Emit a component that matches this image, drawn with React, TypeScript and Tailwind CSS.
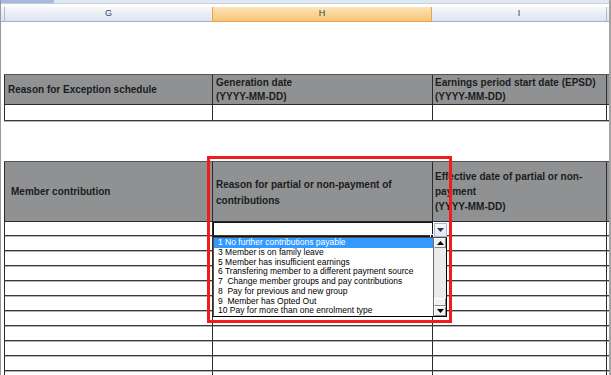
import React from "react";

const items = [
  "1 No further contributions payable",
  "3 Member is on family leave",
  "5 Member has insufficient earnings",
  "6 Transfering member to a different payment source",
  "7  Change member groups and pay contributions",
  "8  Pay for previous and new group",
  "9  Member has Opted Out",
  "10 Pay for more than one enrolment type",
];

function WhiteRow({ h }: { h: string }) {
  return (
    <div className={`flex ${h} border-b border-[#3a3a3a] shadow-[0_1px_0_#b4b4b4]`}>
      <div className="w-[208px] border-l border-[#2b2b2b]" />
      <div className="w-[220px] border-l border-[#2b2b2b]" />
      <div className="w-[174px] border-l border-[#2b2b2b]" />
      <div className="w-[3px] border-l border-[#2b2b2b]" />
    </div>
  );
}

function UpTri() {
  return (
    <svg width="7" height="4" viewBox="0 0 7 4">
      <polygon points="3.5,0 7,4 0,4" fill="#000" />
    </svg>
  );
}

function DownTri({ color = "#000" }: { color?: string }) {
  return (
    <svg width="7" height="4" viewBox="0 0 7 4">
      <polygon points="0,0 7,0 3.5,4" fill={color} />
    </svg>
  );
}

export default function App() {
  const rows = Array.from({ length: 10 });
  return (
    <div className="relative w-[611px] h-[375px] overflow-hidden bg-white border-l border-l-[#9a9a9a] border-r-2 border-r-[#a3a3a3] [font-family:'Liberation_Sans',Arial,sans-serif]">
      {/* top strip */}
      <div className="flex h-[3px]">
        <div className="w-[53px] bg-[#a4bbdb]" />
        <div className="flex-1 bg-[#e1e8f1]" />
      </div>
      <div className="h-px bg-[#c2cedc]" />
      <div className="h-[3px]" />

      {/* column headers */}
      <div className="flex h-[15px] text-[9px] text-[#2f405a]">
        <div className="w-[3px] border-b border-[#9db3cb] bg-gradient-to-b from-[#f5f8fb] to-[#dbe3ed]" />
        <div className="w-[208px] flex items-center justify-center border-l border-b border-[#a9bcd2] border-b-[#9db3cb] bg-gradient-to-b from-[#f7f9fc] to-[#dce4ee]">
          G
        </div>
        <div className="w-[220px] flex items-center justify-center border-x border-b border-[#eea14d] bg-gradient-to-b from-[#fce4b4] to-[#f6c47a]">
          H
        </div>
        <div className="w-[174px] flex items-center justify-center border-b border-[#9db3cb] bg-gradient-to-b from-[#f7f9fc] to-[#dce4ee]">
          I
        </div>
        <div className="w-[3px] border-l border-b border-[#a9bcd2] border-b-[#9db3cb] bg-gradient-to-b from-[#f7f9fc] to-[#dce4ee]" />
      </div>

      {/* table 1 */}
      <div className="ml-[3px] mt-[52px] border-t border-[#555555]">
        <div className="flex h-[30px] border-b border-[#2b2b2b] bg-[#8f9193] text-[10px] font-bold leading-[14px] text-[#1c1c1c] whitespace-nowrap">
          <div className="w-[208px] flex items-center border-l border-[#2b2b2b] px-[3px]">
            Reason for Exception schedule
          </div>
          <div className="w-[220px] flex flex-col justify-center border-l border-[#2b2b2b] px-[3px]">
            <span>Generation date</span>
            <span>(YYYY-MM-DD)</span>
          </div>
          <div className="w-[174px] flex flex-col justify-center border-l border-[#2b2b2b] px-[2px]">
            <span>Earnings period start date (EPSD)</span>
            <span>(YYYY-MM-DD)</span>
          </div>
          <div className="w-[3px] border-l border-[#2b2b2b]" />
        </div>
        <WhiteRow h="h-[16px]" />
      </div>

      {/* table 2 */}
      <div className="ml-[3px] mt-[40px] border-t border-[#555555]">
        <div className="flex h-[60px] border-b border-[#2b2b2b] bg-[#8f9193] text-[10px] font-bold text-[#1c1c1c] whitespace-nowrap">
          <div className="w-[208px] flex items-center border-l border-[#2b2b2b] pl-[6px] leading-[14px]">
            Member contribution
          </div>
          <div className="w-[220px] flex flex-col justify-center border-l border-[#2b2b2b] px-[3px] pt-[2px] leading-[16px]">
            <span>Reason for partial or non-payment of</span>
            <span>contributions</span>
          </div>
          <div className="w-[174px] flex flex-col justify-center border-l border-[#2b2b2b] px-[2px] leading-[15px]">
            <span>Effective date of partial or non-</span>
            <span>payment</span>
            <span>(YYYY-MM-DD)</span>
          </div>
          <div className="w-[3px] border-l border-[#2b2b2b]" />
        </div>
        <WhiteRow h="h-[14px]" />
        {rows.map((_, i) => (
          <WhiteRow key={i} h="h-[15px]" />
        ))}
      </div>

      {/* selected cell outline */}
      <div className="absolute left-[212px] top-[222px] w-[220px] h-[15px] border border-[#111111]" />
      <div className="absolute left-[429px] top-[234px] w-[4px] h-[4px] bg-[#111111] border border-white" />

      {/* dropdown button */}
      <div className="absolute left-[433px] top-[223px] w-[13px] h-[14px] flex items-center justify-center border border-[#a7b7cc] bg-gradient-to-b from-[#f6f8fb] to-[#dde5ef]">
        <DownTri color="#22375f" />
      </div>

      {/* listbox */}
      <div className="absolute left-[212px] top-[237px] w-[234px] h-[80px] flex border border-[#505050] border-r-black border-b-black bg-white text-[8.5px] leading-[9.75px] text-black">
        <div className="flex-1 flex flex-col">
          {items.map((t, i) => (
            <div
              key={i}
              className={
                i === 0
                  ? "h-[9.75px] pl-[4px] whitespace-pre bg-[#3399ff] text-white"
                  : "h-[9.75px] pl-[4px] whitespace-pre"
              }
            >
              {t}
            </div>
          ))}
        </div>
        <div className="w-[13px] flex flex-col border-l border-[#6a6a6a] bg-[#ebebeb]">
          <div className="h-[10px] flex items-center justify-center bg-[#f0f0f0] border border-white border-r-[#888888] border-b-[#888888]">
            <UpTri />
          </div>
          <div className="flex-1" />
          <div className="h-[8px] bg-[#f2f2f2] border border-white border-r-[#888888] border-b-[#888888]" />
          <div className="h-[10px] flex items-center justify-center bg-[#f0f0f0] border border-white border-r-[#888888] border-b-[#888888]">
            <DownTri />
          </div>
        </div>
      </div>

      {/* red highlight box */}
      <div className="absolute left-[206px] top-[156px] w-[245px] h-[167px] border-[3px] border-[#f21c1c]" />
    </div>
  );
}
